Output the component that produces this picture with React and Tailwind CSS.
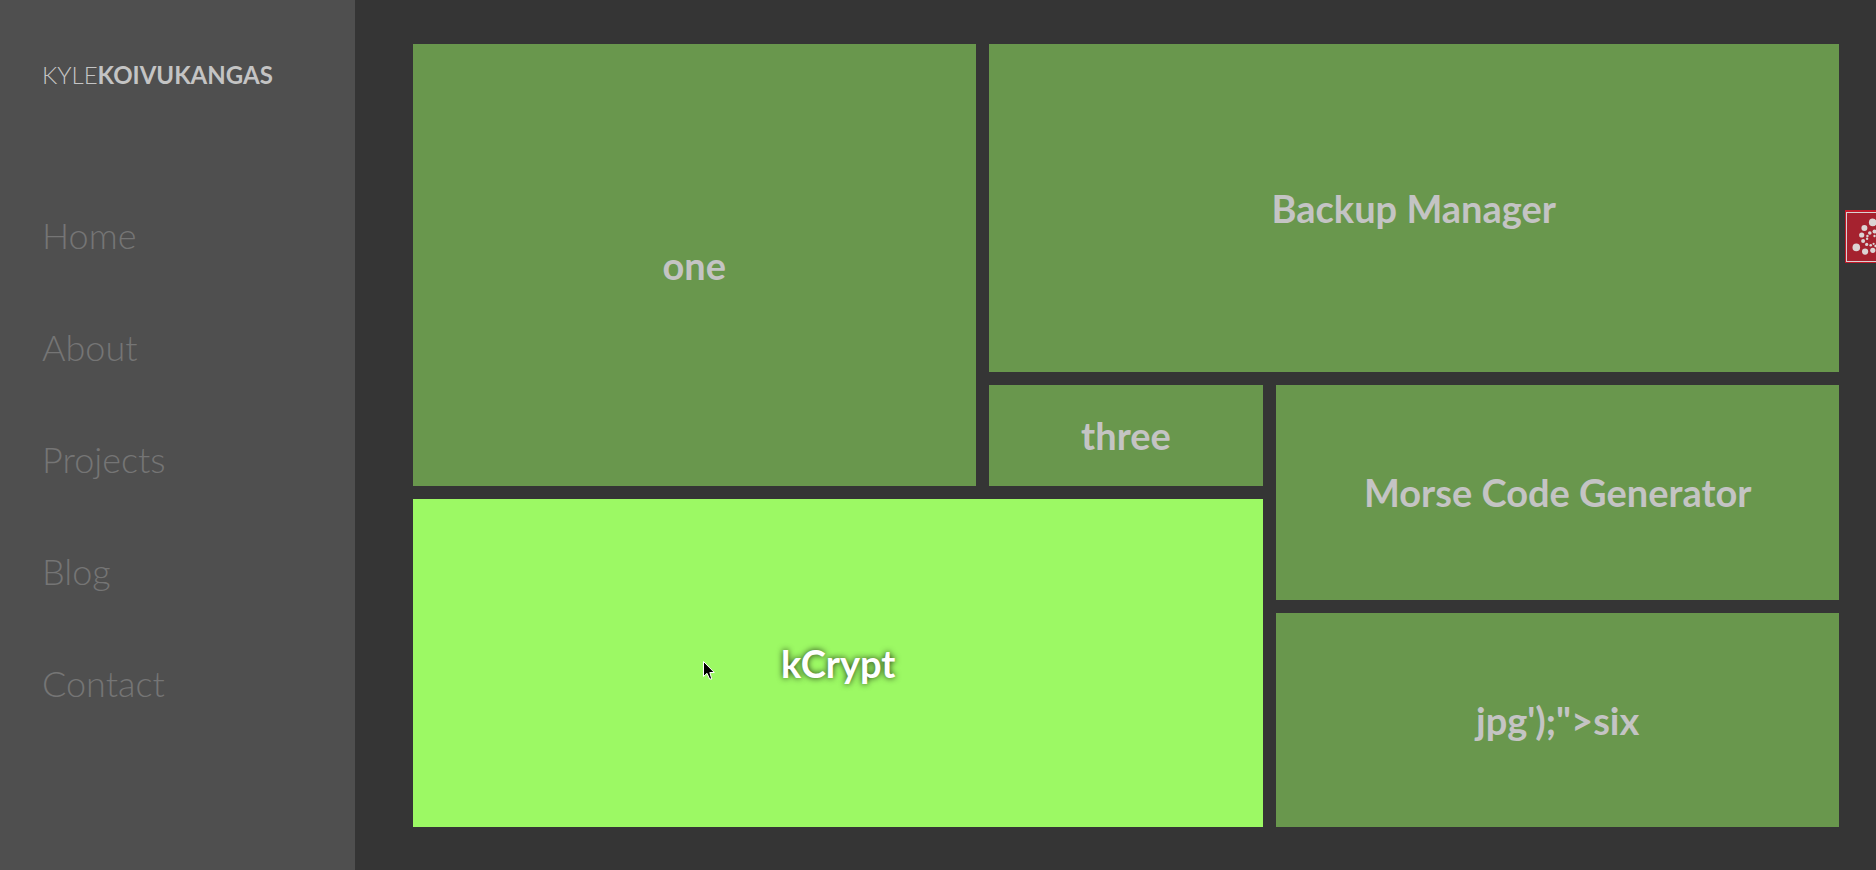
const links = ["Home", "About", "Projects", "Blog", "Contact"];

const tiles = [
  { title: "one", place: "col-span-2 row-span-4" },
  { title: "Backup Manager", place: "col-span-3 row-span-3" },
  { title: "three", place: "col-span-1 row-span-1" },
  { title: "Morse Code Generator", place: "col-span-2 row-span-2" },
  { title: "kCrypt", place: "col-span-3 row-span-3", active: true },
  { title: "jpg');\">six", place: "col-span-2 row-span-2" },
];

const dots = [
  [27.7, 12.4, 3.8], [19.4, 18, 3], [16.7, 25, 2.6], [11.3, 37.4, 3.8], [20.1, 41.6, 3.1], [27.8, 40.3, 2.6],
  [18.1, 31, 2], [24.8, 23, 1.8], [29.5, 21.4, 2], [22.4, 26, 1.2], [22.1, 28.8, 1.2], [21.7, 34.4, 1.6],
  [25.7, 35.2, 1.3], [28.6, 33.8, 1.1], [29.5, 26, 1.2], [30.5, 36, 1.2],
];

function Tile({ title, place, active }) {
  const look = active
    ? "bg-[#9cf964] text-white [text-shadow:0_0_6px_rgba(0,0,0,0.8)]"
    : "bg-[#69974d] text-[#c4c4c4]";
  return (
    <a href="#" className={`relative flex items-center justify-center text-center text-[38px] leading-[44px] font-bold ${place} ${look}`}>
      {title}
      {active && <Pointer />}
    </a>
  );
}

function Pointer() {
  return (
    <svg className="absolute top-[49.4%] left-[34.1%] h-[19px] w-[12px]" viewBox="0 0 12 19" aria-hidden="true">
      <path d="M.5 .5V15.5L4 12.3 6.6 18H8.8L6.8 11.5H11.3Z" fill="#000" stroke="#fff" />
    </svg>
  );
}

export default function App() {
  return (
    <div className="flex min-h-screen overflow-hidden bg-[#353535] font-['Lato','Open_Sans',sans-serif]">
      <aside className="w-[355px] shrink-0 bg-[#4f4f4f] px-[42px] pt-[60px]">
        <a href="#" className="block text-[24px] leading-[30px] text-[#c4c4c4]">
          <span className="font-light">KYLE</span>
          <span className="font-bold">KOIVUKANGAS</span>
        </a>
        <nav className="mt-[88px] flex flex-col">
          {links.map((name) => (
            <a key={name} href="#" className="h-[112px] pt-[36px] text-[36px] leading-[42px] font-light text-[#757575]">
              {name}
            </a>
          ))}
        </nav>
      </aside>
      <main className="grid flex-1 grid-cols-5 grid-rows-7 gap-[13px] pt-[44px] pr-[37px] pb-[43px] pl-[58px]">
        {tiles.map((tile) => (
          <Tile key={tile.title} {...tile} />
        ))}
      </main>
      <button aria-label="Open widget" className="fixed top-[210px] right-0 h-[53px] w-[31px] overflow-hidden">
        <svg className="h-[53px] w-[31px]" viewBox="0 0 31 53">
          <rect width="60" height="53" fill="#c41c2c" />
          <rect x="1" y="2" width="60" height="50" fill="#d9d3d3" />
          <rect x="2" y="3" width="60" height="48" fill="#a5222f" />
          {dots.map(([x, y, r]) => (
            <circle key={`${x}-${y}`} cx={x} cy={y} r={r} fill="#dcd4d4" />
          ))}
        </svg>
      </button>
    </div>
  );
}
